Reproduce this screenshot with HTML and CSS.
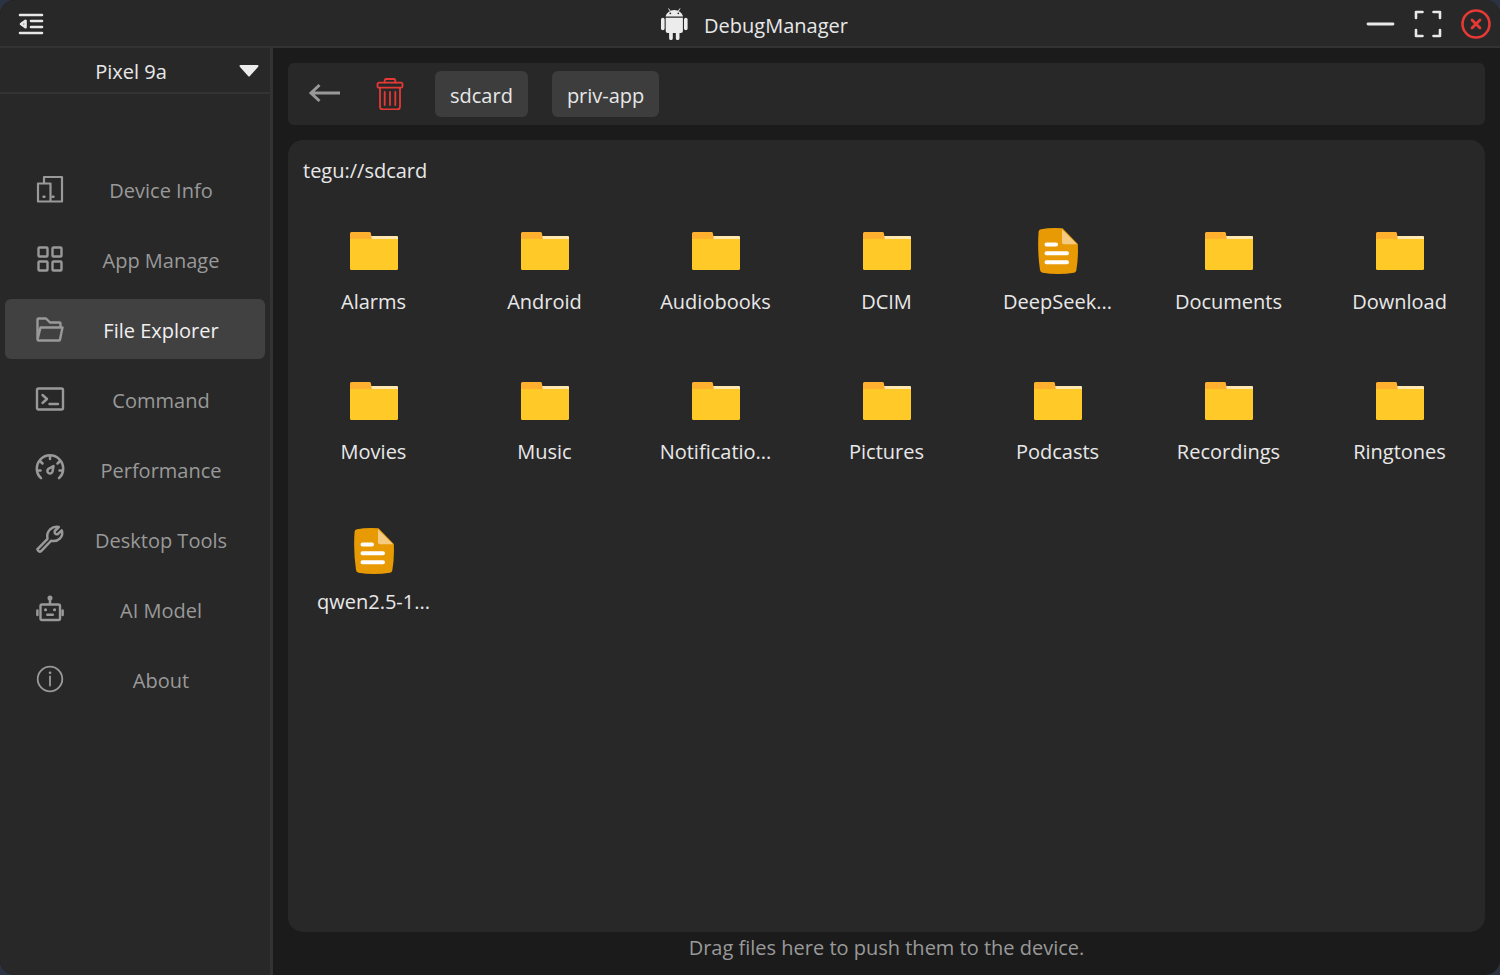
FILE: index.html
```html
<!DOCTYPE html>
<html lang="en">
<head>
<meta charset="utf-8">
<title>DebugManager</title>
<link rel="stylesheet" href="styles.css">
</head>
<body>
<svg class="sprite" aria-hidden="true">
  <symbol id="folder" viewBox="0 0 48 48">
    <path fill="#ffe7b0" d="M20 9h27a1 1 0 0 1 1 1v6H20z"/>
    <path fill="#ffb02e" d="M0 6.500a1.500 1.500 0 0 1 1.500-1.500H19.500a1.500 1.500 0 0 1 1.400 1.200L21.800 12V16H0z"/>
    <path fill="#ffca28" d="M0 12h48v29.500a1.500 1.500 0 0 1-1.500 1.500h-45A1.500 1.500 0 0 1 0 41.500z"/>
  </symbol>
  <symbol id="document" viewBox="0 0 48 48">
    <path fill="#e89a05" d="M7 2.200Q16 .6 28.500 1.300L43.800 17Q44.500 31 42.300 43.500Q42 45.300 40 45.700Q24 48.200 8.500 45.700Q6.300 45.300 6 43Q3.200 24 4.600 4.500Q4.800 2.600 7 2.200z"/>
    <path fill="#f4cb80" d="M28 2.200L43 17.300H30a2 2 0 0 1-2-2z"/>
    <path fill="none" stroke="#fff" stroke-width="4" stroke-linecap="round" d="M12.500 17.500h9.500M12.500 26.300h20.500M12.500 35.200h20.500"/>
  </symbol>
</svg>
<div class="window">
  <header class="titlebar">
    <button class="menu-button" type="button" aria-label="Collapse menu">
      <svg class="icon" viewBox="0 0 30 30"><path d="M4 6h22M15 12h11M15 18h11M4 24h22" stroke-width="2.600"/><path d="M5 15l4.500-3.200v6.400z" stroke-width="2.600"/></svg>
    </button>
    <h1 class="brand">
      <svg class="brand-icon" viewBox="0 0 32 32" aria-hidden="true">
        <g fill="#ececec"><path d="M7.500 8.500a8.900 7.500 0 0 1 17.600 0z"/><path d="M7.700 9.700h17.200V23a2 2 0 0 1-2 2h-1.400v5.200a1.800 1.800 0 0 1-3.700 0V25h-3v5.200a1.800 1.800 0 0 1-3.700 0V25H9.700a2 2 0 0 1-2-2z"/><rect x="3" y="9.700" width="3.600" height="12.500" rx="1.800"/><rect x="26" y="9.700" width="3.600" height="12.500" rx="1.800"/></g>
        <path stroke="#ececec" d="M10.500.5l2 3M22 .5l-2 3"/><circle cx="12.300" cy="5.300" r=".9" fill="#282828"/><circle cx="20.300" cy="5.300" r=".9" fill="#282828"/>
      </svg>
      <span>DebugManager</span>
    </h1>
    <div class="window-controls">
      <button type="button" aria-label="Minimize"><svg class="icon" viewBox="0 0 30 30"><path d="M3 15h25" stroke-width="2.800"/></svg></button>
      <button type="button" aria-label="Maximize"><svg class="icon" viewBox="0 0 30 30"><path d="M3 9V3h6.500M20.500 3H27v6M27 21v6h-6.500M9.500 27H3v-6" stroke-width="2.600"/></svg></button>
      <button class="close" type="button" aria-label="Close"><svg class="icon" viewBox="0 0 30 30"><circle cx="15" cy="15" r="13.500" stroke-width="2.600"/><path d="M11 11l8 8M19 11l-8 8" stroke-width="2.800"/></svg></button>
    </div>
  </header>
  <div class="body">
    <aside class="sidebar">
      <div class="device">
        <select class="device-select" aria-label="Device"><option>Pixel 9a</option></select>
        <svg class="device-arrow" viewBox="0 0 20 12" aria-hidden="true"><path fill="#ececec" d="M1.500 0h17a1 1 0 0 1 .7 1.700l-8.500 9.500a1 1 0 0 1-1.400 0L.8 1.700A1 1 0 0 1 1.500 0z"/></svg>
      </div>
      <nav class="nav" aria-label="Main">
        <button class="nav-item" type="button"><svg class="icon" viewBox="0 0 30 30"><path d="M9 8.500V3h18v24.500H3V9.500h12.500v18" stroke-width="2.200"/><path d="M8.500 22.800h1M17.500 22.800h1" stroke-width="2.400"/></svg><span>Device Info</span></button>
        <button class="nav-item" type="button"><svg class="icon" viewBox="0 0 30 30"><g stroke-width="2.400"><rect x="3.500" y="3.500" width="9" height="9" rx="1"/><rect x="17.500" y="3.500" width="9" height="9" rx="1"/><rect x="3.500" y="17.500" width="9" height="9" rx="1"/><rect x="17.500" y="17.500" width="9" height="9" rx="1"/></g></svg><span>App Manage</span></button>
        <button class="nav-item selected" type="button" aria-current="page"><svg class="icon" viewBox="0 0 30 30"><path d="M2.500 25.500V5.500q0-1 1-1h7.500l4 4h9.500q1 0 1 1v4M2.500 25.500L5.500 13.500h22l-2.500 12q0 1-1 1H3.500q-1 0-1-1z" stroke-width="2.400"/></svg><span>File Explorer</span></button>
        <button class="nav-item" type="button"><svg class="icon" viewBox="0 0 30 30"><rect x="2" y="4.500" width="26" height="21" rx="1.500" stroke-width="2.400"/><path d="M7.500 11l4.500 4-4.500 4M14.500 20h8.500" stroke-width="2.400"/></svg><span>Command</span></button>
        <button class="nav-item" type="button"><svg class="icon" viewBox="0 0 30 30"><g stroke-width="2.500"><path d="M6 24.200A13.200 13.200 0 1 1 24 24.200M15 2v3M5.500 7.500l2 2M24.500 7.500l-2 2M2 16.500h3.500M28 16.500h-3.500"/><path d="M18.500 12l-1 5.500a2.600 2.600 0 1 1-3.500-3z"/></g></svg><span>Performance</span></button>
        <button class="nav-item" type="button"><svg class="icon" viewBox="0 0 30 30"><path d="M2.800 24.800L12.500 14.800Q11.300 9.300 15 5.500Q19 1.800 23.800 3L19.800 7Q19 10.800 22.800 10.200L26.700 6.300Q28.500 11 24.800 14.600Q21.300 18 16 16.800L5.900 27.300Q4.800 28.200 3.800 27.200L2.900 26.300Q2 25.500 2.800 24.800z" stroke-width="2.500"/></svg><span>Desktop Tools</span></button>
        <button class="nav-item" type="button"><svg class="icon" viewBox="0 0 30 30"><rect x="5.500" y="10.500" width="19.500" height="15.500" rx="1.500" stroke-width="2.400"/><path d="M15 9.500V4M2.400 16.500v4.500M27.600 16.500v4.500M12.300 20.700h5.500" stroke-width="2.500"/><circle cx="15" cy="4" r="1.300" stroke-width="2.400"/><path d="M10.500 15.800h.1M19.500 15.800h.1" stroke-width="3"/></svg><span>AI Model</span></button>
        <button class="nav-item" type="button"><svg class="icon" viewBox="0 0 30 30"><circle cx="15" cy="15" r="12.300" stroke-width="1.800"/><path d="M15 12.500v9" stroke-width="1.800"/><path d="M15 8.700h.1" stroke-width="2.600"/></svg><span>About</span></button>
      </nav>
    </aside>
    <main class="content">
      <div class="toolbar">
        <button class="tool" type="button" aria-label="Back"><svg class="icon" viewBox="0 0 32 32"><path d="M3 15h29M11.500 7L3 15l8.500 8" stroke-width="3" stroke-linecap="butt" stroke-linejoin="miter"/></svg></button>
        <button class="tool delete" type="button" aria-label="Delete"><svg class="icon" viewBox="0 0 32 32"><path d="M10.700 4.500V2.500q0-1.500 1.500-1.500h7.600q1.500 0 1.500 1.500v2M6 10v18.500q0 3 3 3h14q3 0 3-3V10M10.700 14v13M16 14v13M21.300 14v13" stroke-width="1.800"/><rect x="3.500" y="4.700" width="25" height="5" rx="1.500" stroke-width="1.800"/></svg></button>
        <button class="crumb" type="button">sdcard</button>
        <button class="crumb" type="button">priv-app</button>
      </div>
      <section class="panel" aria-label="Files">
        <p class="path">tegu://sdcard</p>
        <div class="files">
          <button class="file" type="button"><svg><use href="#folder"/></svg><span>Alarms</span></button>
          <button class="file" type="button"><svg><use href="#folder"/></svg><span>Android</span></button>
          <button class="file" type="button"><svg><use href="#folder"/></svg><span>Audiobooks</span></button>
          <button class="file" type="button"><svg><use href="#folder"/></svg><span>DCIM</span></button>
          <button class="file" type="button"><svg><use href="#document"/></svg><span>DeepSeek...</span></button>
          <button class="file" type="button"><svg><use href="#folder"/></svg><span>Documents</span></button>
          <button class="file" type="button"><svg><use href="#folder"/></svg><span>Download</span></button>
          <button class="file" type="button"><svg><use href="#folder"/></svg><span>Movies</span></button>
          <button class="file" type="button"><svg><use href="#folder"/></svg><span>Music</span></button>
          <button class="file" type="button"><svg><use href="#folder"/></svg><span>Notificatio...</span></button>
          <button class="file" type="button"><svg><use href="#folder"/></svg><span>Pictures</span></button>
          <button class="file" type="button"><svg><use href="#folder"/></svg><span>Podcasts</span></button>
          <button class="file" type="button"><svg><use href="#folder"/></svg><span>Recordings</span></button>
          <button class="file" type="button"><svg><use href="#folder"/></svg><span>Ringtones</span></button>
          <button class="file" type="button"><svg><use href="#document"/></svg><span>qwen2.5-1...</span></button>
        </div>
      </section>
      <p class="hint">Drag files here to push them to the device.</p>
    </main>
  </div>
</div>
</body>
</html>
```
FILE: styles.css
```css
* {
  box-sizing: border-box;
}

body {
  margin: 0;
  background: #2b3342;
  color: #e8e8e8;
  font: 20px/28px "Open Sans", "Noto Sans", sans-serif;
}

button,
select {
  margin: 0;
  padding: 0;
  border: 0;
  background: none;
  color: inherit;
  font: inherit;
}

.sprite {
  display: none;
}

.icon {
  display: block;
  width: 30px;
  height: 30px;
  fill: none;
  stroke: currentColor;
  stroke-linecap: round;
  stroke-linejoin: round;
}

.window {
  display: flex;
  flex-direction: column;
  min-height: 100vh;
  overflow: hidden;
  border-radius: 15px;
  background: #1b1b1b;
}

.titlebar {
  display: grid;
  grid-template-columns: 1fr auto 1fr;
  align-items: center;
  height: 48px;
  padding-top: 2px;
  border-bottom: 2px solid #333;
  background: #282828;
}

.menu-button {
  justify-self: start;
  padding: 0 16px;
}

.brand {
  display: flex;
  align-items: center;
  gap: 14px;
  margin: 0;
  padding-left: 6px;
  font-size: 20px;
  font-weight: 400;
}

.brand span {
  padding-top: 4px;
}

.brand-icon {
  width: 32px;
  height: 32px;
}

.window-controls {
  display: flex;
  justify-content: flex-end;
}

.window-controls button {
  display: grid;
  place-items: center;
  width: 48px;
  height: 44px;
}

.window-controls .close {
  color: #e53935;
}

.body {
  display: flex;
  flex: 1;
}

.sidebar {
  flex: none;
  width: 273px;
  border-right: 3px solid #333;
  background: #282828;
}

.device {
  position: relative;
  border-bottom: 2px solid #333;
}

.device-select {
  display: block;
  width: 100%;
  height: 44px;
  padding: 4px 8px 0 0;
  appearance: none;
  text-align: center;
  text-align-last: center;
}

.device-arrow {
  position: absolute;
  top: 17px;
  right: 11px;
  width: 20px;
  height: 12px;
  pointer-events: none;
}

.nav {
  display: flex;
  flex-direction: column;
  gap: 10px;
  padding: 65px 5px 0;
}

.nav-item {
  display: grid;
  grid-template-columns: 90px 1fr;
  align-items: center;
  height: 60px;
  padding-right: 38px;
  border-radius: 6px;
  color: #999;
  white-space: nowrap;
}

.nav-item .icon {
  justify-self: center;
  stroke: #999;
}

.nav-item span {
  justify-self: center;
  padding-top: 4px;
}

.nav-item.selected {
  background: #414141;
  color: #f0f0f0;
}

.content {
  display: flex;
  flex: 1;
  flex-direction: column;
  min-width: 0;
  padding: 15px 15px 13px;
}

.toolbar {
  display: flex;
  gap: 24px;
  padding: 8px 15px;
  border-radius: 6px;
  background: #282828;
}

.tool {
  display: grid;
  place-items: center;
  width: 42px;
  height: 46px;
  color: #999;
}

.tool .icon {
  width: 32px;
  height: 32px;
}

.tool.delete {
  color: #e53935;
}

.crumb {
  height: 46px;
  padding: 4px 15px 0;
  border-radius: 6px;
  background: #3d3d3d;
}

.panel {
  flex: 1;
  margin-top: 15px;
  padding-top: 17px;
  border-radius: 15px;
  background: #282828;
}

.path {
  margin: 0 15px 16px;
}

.files {
  display: grid;
  grid-template-columns: repeat(7, 1fr);
  grid-auto-rows: 150px;
}

.file {
  display: flex;
  flex-direction: column;
  align-items: center;
  gap: 13px;
  padding-top: 26px;
}

.file svg {
  width: 48px;
  height: 48px;
}

.hint {
  margin: 2px 0 0;
  color: #999;
  text-align: center;
}
```
